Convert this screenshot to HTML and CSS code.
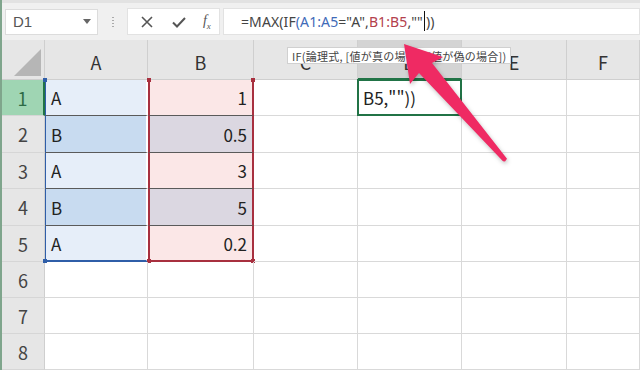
FILE: index.html
```html
<!DOCTYPE html>
<html lang="ja">
<head>
    <meta charset="UTF-8">
    <meta name="viewport" content="width=device-width, initial-scale=1.0">
    <title>MAX IF</title>
    <link rel="stylesheet" href="styles.css">
</head>
<body>
<div class="window">
    <!-- 数式バー -->
    <div class="toolbar">
        <div class="namebox">
            <span>D1</span>
            <svg class="caret" width="8" height="5" viewBox="0 0 8 5"><path d="M0 0h8L4 5z" fill="#666"/></svg>
        </div>
        <div class="grip"><i></i><i></i><i></i><i></i></div>
        <div class="iconbox">
            <svg width="14" height="14" viewBox="0 0 14 14"><path d="M2 2l10 10M12 2L2 12" stroke="#555" stroke-width="1.6"/></svg>
            <svg width="16" height="14" viewBox="0 0 16 14"><path d="M2 7.5l4 4L14 3" stroke="#555" stroke-width="2" fill="none"/></svg>
            <span class="fx">f<sub>x</sub></span>
        </div>
        <div class="formula">=MAX(IF<span class="ref-a">(A1:A5</span>="A",<span class="ref-b">B1:B5</span>,""<span class="cursor"></span>))</div>
    </div>

    <!-- シート -->
    <div class="sheet">
        <div class="corner"><span></span></div>
        <div class="colhead">A</div>
        <div class="colhead">B</div>
        <div class="colhead">C</div>
        <div class="colhead active">D</div>
        <div class="colhead">E</div>
        <div class="colhead">F</div>

        <div class="rowhead active">1</div>
        <div class="cell a light top">A<span class="dot blue tl"></span></div>
        <div class="cell b light num top">1<span class="dot red tl"></span><span class="dot red tr"></span></div>
        <div class="cell"></div>
        <div class="cell current">B5,""))</div>
        <div class="cell"></div>
        <div class="cell"></div>

        <div class="rowhead">2</div>
        <div class="cell a dark">B</div>
        <div class="cell b dark num">0.5</div>
        <div class="cell"></div>
        <div class="cell"></div>
        <div class="cell"></div>
        <div class="cell"></div>

        <div class="rowhead">3</div>
        <div class="cell a light">A</div>
        <div class="cell b light num">3</div>
        <div class="cell"></div>
        <div class="cell"></div>
        <div class="cell"></div>
        <div class="cell"></div>

        <div class="rowhead">4</div>
        <div class="cell a dark">B</div>
        <div class="cell b dark num">5</div>
        <div class="cell"></div>
        <div class="cell"></div>
        <div class="cell"></div>
        <div class="cell"></div>

        <div class="rowhead">5</div>
        <div class="cell a light last">A<span class="dot blue bl"></span></div>
        <div class="cell b light num last">0.2<span class="dot red bl"></span><span class="dot red br"></span></div>
        <div class="cell"></div>
        <div class="cell"></div>
        <div class="cell"></div>
        <div class="cell"></div>

        <div class="rowhead">6</div>
        <div class="cell"></div><div class="cell"></div><div class="cell"></div>
        <div class="cell"></div><div class="cell"></div><div class="cell"></div>

        <div class="rowhead">7</div>
        <div class="cell"></div><div class="cell"></div><div class="cell"></div>
        <div class="cell"></div><div class="cell"></div><div class="cell"></div>

        <div class="rowhead">8</div>
        <div class="cell"></div><div class="cell"></div><div class="cell"></div>
        <div class="cell"></div><div class="cell"></div><div class="cell"></div>
    </div>

    <!-- 関数ヒント -->
    <div class="hint">IF(論理式, [値が真の場合], [値が偽の場合])</div>

    <!-- 矢印 -->
    <svg class="arrow" width="640" height="370" viewBox="0 0 640 370">
        <polygon points="404,44 443,57 432,63 507,158.7 505,161.5 503,161.3 419,73 410,84" fill="#ef2a63"/>
    </svg>
</div>
</body>
</html>
```

FILE: styles.css
```css
body {
    margin: 0;
    font-family: "Noto Sans CJK JP", "Noto Sans", sans-serif;
    color: #222;
    background-color: #fff;
}
.window {
    position: relative;
    width: 640px;
    height: 370px;
    overflow: hidden;
    border-left: 2px solid #7fa58c;
    box-sizing: border-box;
}

/* formula bar */
.toolbar {
    display: flex;
    align-items: center;
    height: 40px;
    padding-left: 3px;
    background-color: #f0f0f0;
    border-top: 3px solid #e2e2e2;
    box-sizing: border-box;
}
.namebox {
    display: flex;
    align-items: center;
    justify-content: space-between;
    width: 93px;
    height: 26px;
    padding: 0 6px 0 7px;
    background-color: #fff;
    border: 1px solid #dcdcdc;
    box-sizing: border-box;
    font-family: "Liberation Sans", sans-serif;
    font-size: 15px;
    color: #555;
}
.grip {
    display: flex;
    flex-direction: column;
    gap: 2px;
    width: 29px;
    align-items: center;
}
.grip i {
    width: 2px;
    height: 1px;
    background-color: #aaa;
}
.iconbox {
    display: flex;
    align-items: center;
    justify-content: space-around;
    width: 93px;
    height: 27px;
    padding-left: 4px;
    background-color: #fff;
    border: 1px solid #e2e2e2;
    box-sizing: border-box;
}
.fx {
    font-family: "Liberation Serif", serif;
    font-style: italic;
    font-size: 14px;
    color: #555;
}
.fx sub {
    font-size: 9px;
}
.formula {
    flex: 1;
    height: 27px;
    margin-left: 3px;
    padding-left: 17px;
    line-height: 26px;
    background-color: #fff;
    border: 1px solid #e2e2e2;
    box-sizing: border-box;
    font-family: "Noto Sans", sans-serif;
    font-size: 14px;
    letter-spacing: 0.1px;
    color: #444;
    white-space: nowrap;
}
.ref-a {
    color: #3f6bb8;
}
.ref-b {
    color: #b3404c;
}
.cursor {
    display: inline-block;
    width: 1px;
    height: 20px;
    margin: 0 1px;
    vertical-align: -4px;
    background-color: #111;
}

/* sheet */
.sheet {
    display: grid;
    grid-template-columns: 43px 103px 106px 104px 104px 105px 73px;
    grid-template-rows: 40px 36px 37px 36px 37px 36px 36px 36px 36px;
}
.corner {
    display: flex;
    align-items: flex-end;
    justify-content: flex-end;
    padding: 0 3px 3px 0;
    background-color: #e6e6e6;
    border-right: 1px solid #cfcfcf;
    border-bottom: 1px solid #cfcfcf;
}
.corner span {
    width: 0;
    height: 0;
    border-left: 27px solid transparent;
    border-bottom: 27px solid #b6b6b6;
}
.colhead {
    display: flex;
    align-items: center;
    justify-content: center;
    padding-top: 5px;
    background-color: #e6e6e6;
    border-right: 1px solid #cfcfcf;
    border-bottom: 1px solid #cfcfcf;
    box-sizing: border-box;
    font-size: 18px;
    color: #333;
}
.colhead.active {
    background-color: #d4d4d4;
    border-bottom: 2px solid #217346;
}
.rowhead {
    display: flex;
    align-items: center;
    justify-content: center;
    background-color: #e6e6e6;
    border-right: 1px solid #cfcfcf;
    border-bottom: 1px solid #d6d6d6;
    box-sizing: border-box;
    font-size: 18px;
    color: #444;
}
.rowhead.active {
    background-color: #9fd5b3;
    color: #2d6a45;
    border-right: 2px solid #217346;
}
.cell {
    position: relative;
    display: flex;
    align-items: center;
    padding: 0 5px;
    border-right: 1px solid #d9d9d9;
    border-bottom: 1px solid #d9d9d9;
    box-sizing: border-box;
    font-size: 17px;
    color: #222;
}
.cell.num {
    justify-content: flex-end;
}
.cell.a {
    border-left: 1px solid #2f5ea8;
    border-right: 2px solid #fff;
    border-bottom-color: #5a5a5a;
}
.cell.a.light { background-color: #e6eef9; }
.cell.a.dark { background-color: #c8dbf0; }
.cell.b {
    border-left: 2px solid #a8303f;
    border-right: 2px solid #a8303f;
    border-bottom-color: #5a5a5a;
}
.cell.b.light { background-color: #fbe7e7; }
.cell.b.dark { background-color: #dbd7e1; }
.cell.a.last {
    border-bottom: 2px solid #2f5ea8;
}
.cell.b.last {
    border-bottom: 2px solid #a8303f;
}
.cell.current {
    border: 2px solid #217346;
    margin: -1px 0 0 -1px;
    padding-left: 4px;
}
.dot {
    position: absolute;
    width: 4px;
    height: 4px;
}
.dot.red { background-color: #a8303f; }
.dot.blue { background-color: #2f5ea8; }
.dot.tl { left: -3px; top: -2px; }
.dot.tr { right: -3px; top: -2px; }
.dot.bl { left: -3px; bottom: -3px; }
.dot.br { right: -3px; bottom: -3px; }

/* hint + arrow */
.hint {
    position: absolute;
    left: 285px;
    top: 47px;
    padding: 0 4px;
    height: 17px;
    line-height: 16px;
    background-color: #fff;
    border: 1px solid #d0d0d0;
    box-sizing: border-box;
    font-size: 11px;
    letter-spacing: 0.25px;
    color: #444;
    white-space: nowrap;
}
.arrow {
    position: absolute;
    left: -2px;
    top: 0;
    filter: drop-shadow(1px 2px 2px rgba(0, 0, 0, 0.25));
}
```
